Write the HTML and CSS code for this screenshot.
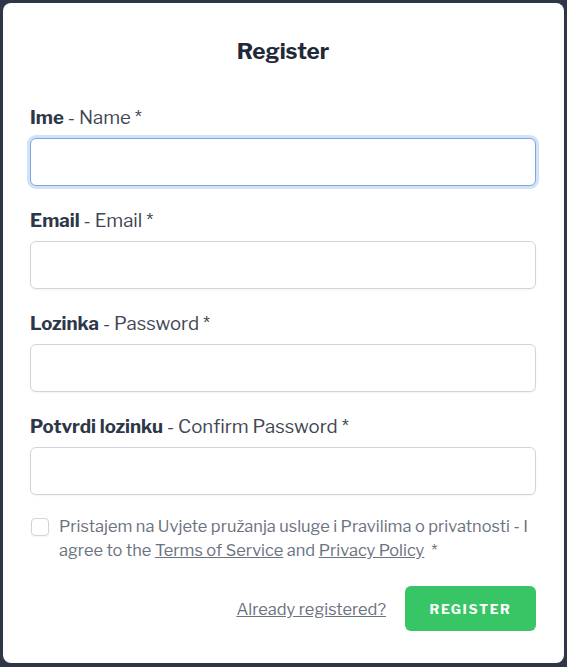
FILE: index.html
```html
<!DOCTYPE html>
<html>
<head>
<meta charset="utf-8">
<link rel="stylesheet" href="styles.css">
</head>
<body>
<div class="card">
  <h1 class="title">Register</h1>
  <form class="form">
    <div class="field">
      <label class="label"><b>Ime</b> - Name *</label>
      <input class="input input-focus" type="text">
    </div>
    <div class="field">
      <label class="label"><b>Email</b> - Email *</label>
      <input class="input" type="text">
    </div>
    <div class="field">
      <label class="label"><b>Lozinka</b> - Password *</label>
      <input class="input" type="password">
    </div>
    <div class="field">
      <label class="label"><b>Potvrdi lozinku</b> - Confirm Password *</label>
      <input class="input" type="password">
    </div>
    <div class="terms">
      <span class="checkbox"></span>
      <p class="terms-text">Pristajem na Uvjete pružanja usluge i Pravilima o privatnosti - I agree to the <a href="#">Terms of Service</a> and <a href="#">Privacy Policy</a>&nbsp; *</p>
    </div>
    <div class="actions">
      <a class="login-link" href="#">Already registered?</a>
      <button class="btn" type="button">Register</button>
    </div>
  </form>
</div>
</body>
</html>
```
FILE: styles.css
```css
html, body {
  margin: 0;
  padding: 0;
  background: #2f3645;
}
body {
  padding: 3px 3px 4px 3px;
  font-family: "Libre Franklin", "Open Sans", "Liberation Sans", sans-serif;
  color: #374151;
}
.card {
  background: #ffffff;
  border-radius: 8px;
  height: 660px;
  box-sizing: border-box;
  padding: 34px 28px 0 27px;
}
.title {
  margin: 0;
  text-align: center;
  font-size: 22.5px;
  line-height: 28px;
  font-weight: 700;
  color: #1f2937;
}
.form {
  margin-top: 41px;
  display: flex;
  flex-direction: column;
}
.field {
  display: flex;
  flex-direction: column;
  gap: 8px;
  margin-bottom: 23px;
}
.label {
  font-size: 18.6px;
  line-height: 24px;
  color: #3f4654;
}
.label b {
  font-weight: 700;
  color: #2d3748;
}
.input {
  box-sizing: border-box;
  height: 48px;
  border: 1px solid #d1d5db;
  border-radius: 6px;
  box-shadow: 0 1px 2px rgba(0,0,0,0.05);
  outline: none;
  margin: 0;
  padding: 0 12px;
  font: inherit;
}
.input-focus {
  border-color: #7fa6e3;
  box-shadow: 0 0 0 3px #d3e2f8;
}
.terms {
  display: flex;
  align-items: flex-start;
  gap: 10px;
  margin-top: -4px;
}
.checkbox {
  flex: none;
  width: 16px;
  height: 16px;
  margin: 4px 0 0 1px;
  border: 1px solid #d1d5db;
  border-radius: 4px;
  box-shadow: 0 1px 2px rgba(0,0,0,0.05);
}
.terms-text {
  margin: 0;
  font-size: 16.4px;
  line-height: 24px;
  color: #6b7280;
}
.terms-text a {
  color: #6b7280;
  text-decoration: underline;
}
.actions {
  display: flex;
  justify-content: flex-end;
  align-items: center;
  gap: 19px;
  margin-top: 24px;
}
.login-link {
  font-size: 16.4px;
  color: #6b7280;
  text-decoration: underline;
}
.btn {
  width: 131px;
  height: 45px;
  border: none;
  border-radius: 6px;
  background: #38c566;
  color: #ffffff;
  font-family: inherit;
  font-size: 13.5px;
  font-weight: 700;
  letter-spacing: 1.6px;
  text-transform: uppercase;
}
```
